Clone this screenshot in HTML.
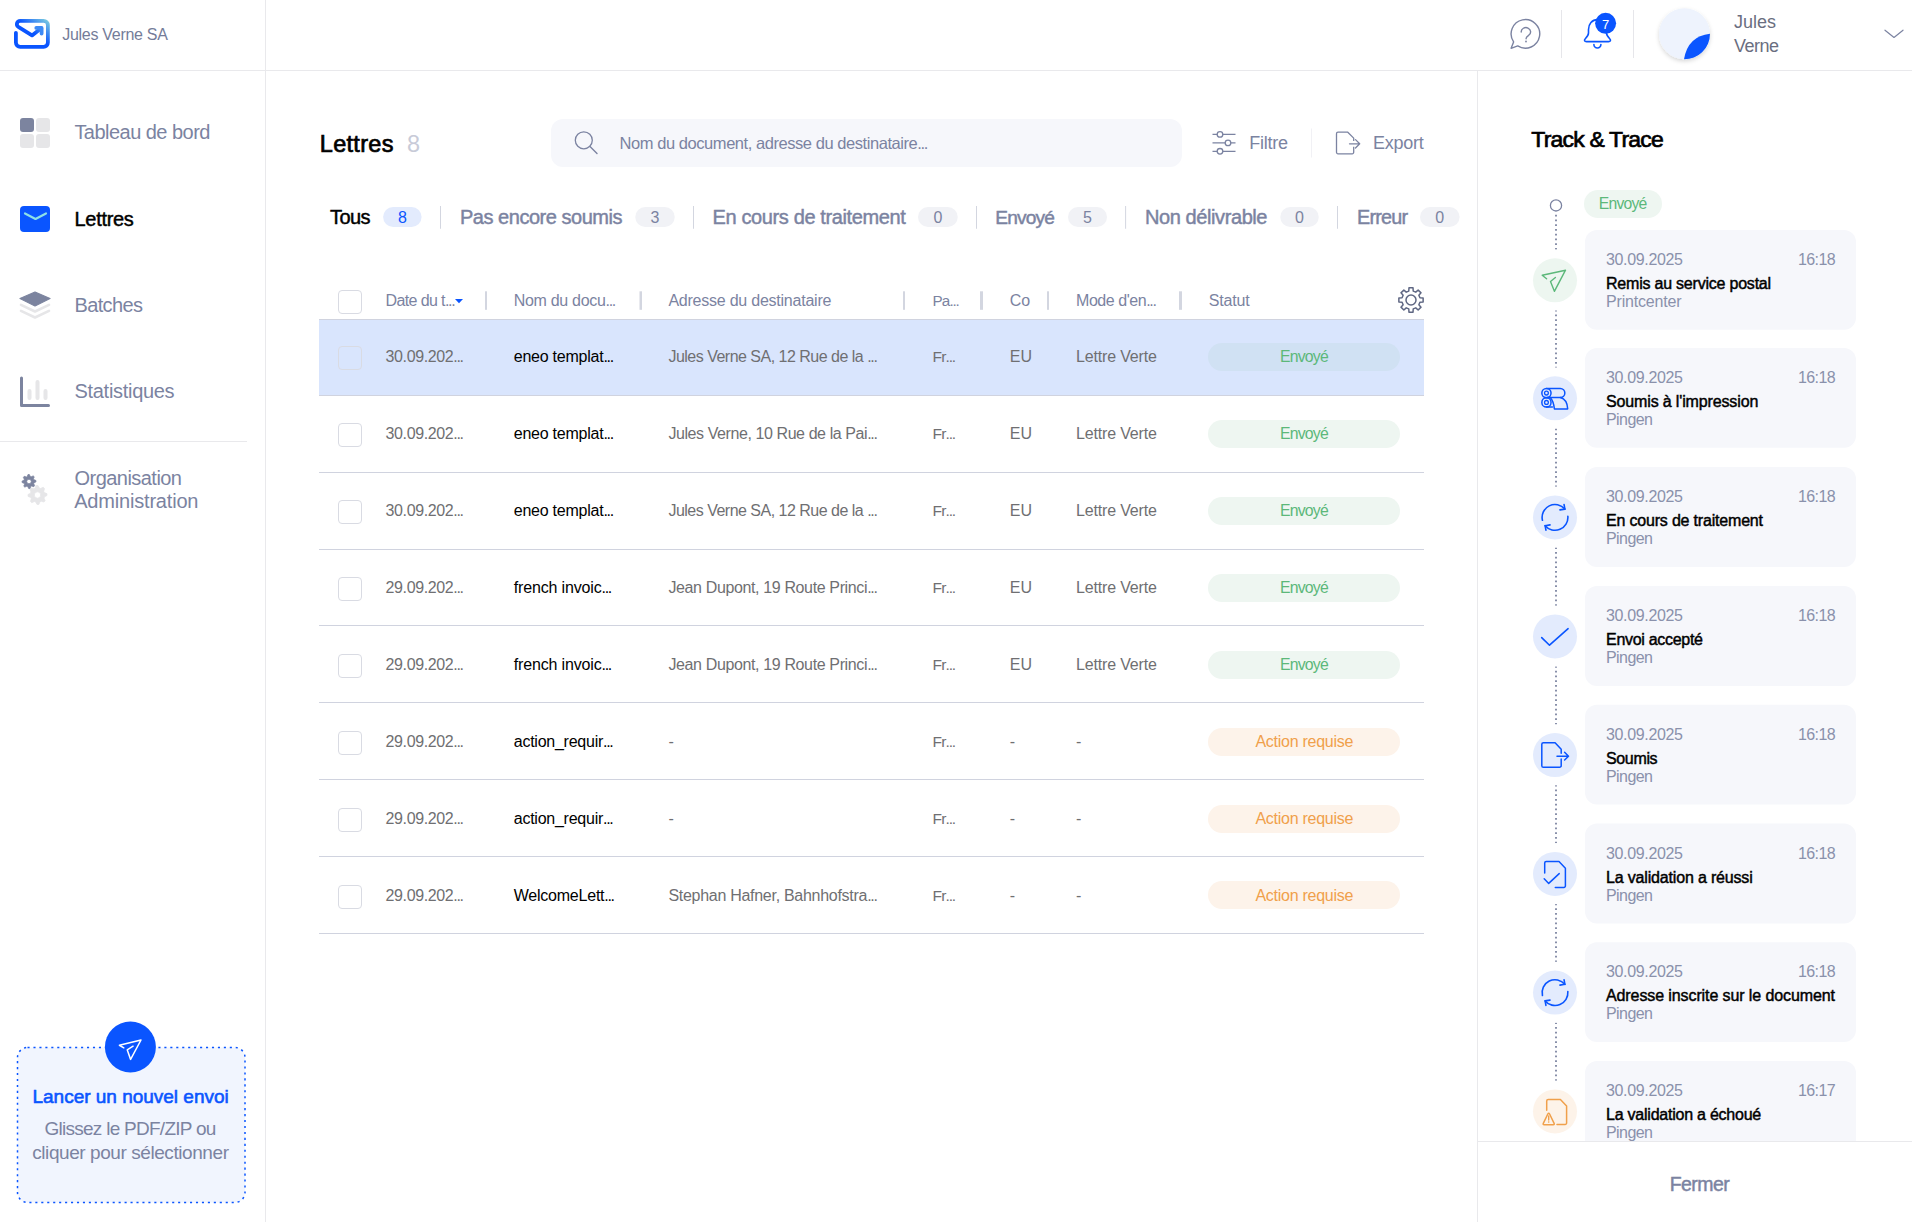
<!DOCTYPE html>
<html><head><meta charset="utf-8"><title>Lettres</title>
<style>
html,body{margin:0;padding:0;background:#fff;}
body{width:1912px;height:1222px;position:relative;overflow:hidden;font-family:"Liberation Sans",sans-serif;}
.t{position:absolute;white-space:nowrap;line-height:1;}
svg{position:absolute;left:0;top:0;}
</style></head><body>
<svg width="1912" height="1222" viewBox="0 0 1912 1222">
<rect x="0" y="70" width="1912" height="1" fill="#e9e9ec"/>
<rect x="265" y="0" width="1" height="1222" fill="#e9e9ec"/>
<rect x="1477" y="71" width="1" height="1151" fill="#e9e9ec"/>
<defs><linearGradient id="lg" x1="0" y1="1" x2="1" y2="0">
<stop offset="0" stop-color="#0a55ff"/><stop offset="0.55" stop-color="#0a55ff"/><stop offset="1" stop-color="#7ac9e0"/></linearGradient></defs>
<path d="M15.9,32.8 V42.5 a4.3,4.3 0 0 0 4.3,4.3 H43.6 a4.3,4.3 0 0 0 4.3,-4.3 V25.1 a4.3,4.3 0 0 0 -4.3,-4.3 H20.2 a3.3,3.3 0 0 0 -1.9,6 L32,35.4 L41.2,28.2" fill="none" stroke="url(#lg)" stroke-width="3.8" stroke-linecap="round" stroke-linejoin="round"/>
<path d="M36.3,27.9 H41.6 V33.6" fill="none" stroke="#3d8af5" stroke-width="3.8" stroke-linecap="round" stroke-linejoin="round"/>
<rect x="20" y="118" width="14" height="14" rx="3" fill="#7c849f"/>
<rect x="36" y="118" width="14" height="14" rx="3" fill="#e6e6e8"/>
<rect x="20" y="134" width="14" height="14" rx="3" fill="#e6e6e8"/>
<rect x="36" y="134" width="14" height="14" rx="3" fill="#e6e6e8"/>
<rect x="20" y="206" width="30" height="26" rx="4" fill="#0a55ff"/>
<path d="M25,213.5 L35.5,219 L46,213.5" fill="none" stroke="#8de0e6" stroke-width="2.2" stroke-linecap="round" stroke-linejoin="round"/>
<path d="M35,292 L50,298.5 L35,306 L20,298.5 Z" fill="#7c849f" stroke="#7c849f" stroke-width="1.2" stroke-linejoin="round"/>
<path d="M21,304.8 L35,311.5 L49,304.8" fill="none" stroke="#e6e6e8" stroke-width="2.6" stroke-linecap="round" stroke-linejoin="round"/>
<path d="M21,310.8 L35,317.5 L49,310.8" fill="none" stroke="#e6e6e8" stroke-width="2.6" stroke-linecap="round" stroke-linejoin="round"/>
<path d="M21.5,378 V405.5 H48.5" fill="none" stroke="#7c849f" stroke-width="3" stroke-linecap="round" stroke-linejoin="round"/>
<path d="M29.5,391 V398 M37.5,382 V398 M45.5,391 V398" fill="none" stroke="#e6e6e8" stroke-width="4" stroke-linecap="round"/>
<rect x="0" y="441" width="247" height="1" fill="#e9e9ec"/>
<path d="M36.11,485.60 L37.97,485.51 L39.25,488.02 L40.58,488.49 L43.16,487.37 L44.54,488.62 L43.68,491.30 L44.28,492.57 L46.90,493.61 L46.99,495.47 L44.48,496.75 L44.01,498.08 L45.13,500.66 L43.88,502.04 L41.20,501.18 L39.93,501.78 L38.89,504.40 L37.03,504.49 L35.75,501.98 L34.42,501.51 L31.84,502.63 L30.46,501.38 L31.32,498.70 L30.72,497.43 L28.10,496.39 L28.01,494.53 L30.52,493.25 L30.99,491.92 L29.87,489.34 L31.12,487.96 L33.80,488.82 L35.07,488.22 Z M40.7,495 A3.2,3.2 0 1 0 34.3,495 A3.2,3.2 0 1 0 40.7,495 Z" fill="#e6e6e8" fill-rule="evenodd" stroke="#e6e6e8" stroke-width="0.8" stroke-linejoin="round"/>
<path d="M27.97,474.58 L29.34,474.51 L30.26,476.46 L31.22,476.80 L33.17,475.88 L34.19,476.80 L33.46,478.83 L33.90,479.75 L35.92,480.47 L35.99,481.84 L34.04,482.76 L33.70,483.72 L34.62,485.67 L33.70,486.69 L31.67,485.96 L30.75,486.40 L30.03,488.42 L28.66,488.49 L27.74,486.54 L26.78,486.20 L24.83,487.12 L23.81,486.20 L24.54,484.17 L24.10,483.25 L22.08,482.53 L22.01,481.16 L23.96,480.24 L24.30,479.28 L23.38,477.33 L24.30,476.31 L26.33,477.04 L27.25,476.60 Z M31.3,481.5 A2.3,2.3 0 1 0 26.7,481.5 A2.3,2.3 0 1 0 31.3,481.5 Z" fill="#7c849f" fill-rule="evenodd" stroke="#7c849f" stroke-width="0.8" stroke-linejoin="round"/>
<rect x="17.5" y="1047.5" width="227.5" height="154.9" rx="10" fill="#f1f5fe" stroke="#0a55ff" stroke-width="1.5" stroke-dasharray="2.1 3.85"/>
<circle cx="130.4" cy="1047" r="25.5" fill="#0a55ff"/>
<path d="M123.8,1047.8 L119.4,1045.25 L141,1040 L130.6,1059.4 L127.2,1049.8 L133.1,1046.2" fill="none" stroke="#fff" stroke-width="1.5" stroke-linejoin="round" stroke-linecap="round"/>
<path d="M1513.6,41.9 A14.3,14.3 0 1 1 1517.7,45.9 L1511.1,48.3 Z" fill="none" stroke="#7b83a1" stroke-width="1.4" stroke-linejoin="round"/>
<path d="M1521.2,32 a4.7,4.3 0 1 1 7.4,3.4 c-1.4,0.9 -2.5,1.5 -2.5,3.1 v0.2" fill="none" stroke="#7b83a1" stroke-width="1.4" stroke-linecap="round"/>
<circle cx="1526" cy="41.5" r="0.9" fill="#7b83a1"/>
<rect x="1561" y="10" width="1" height="48" fill="#e6e6ea"/>
<rect x="1633" y="10" width="1" height="48" fill="#e6e6ea"/>
<path d="M1597.5,19.6 c-5.5,0 -9,4.5 -9,10 v3.5 c0,2.2 -1.2,3.6 -3.2,5.6 c-1.5,1.5 -0.8,2.9 1.2,2.9 h22 c2,0 2.7,-1.4 1.2,-2.9 c-2,-2 -3.2,-3.4 -3.2,-5.6 v-3.5 c0,-5.5 -3.5,-10 -9,-10 Z" fill="none" stroke="#0a55ff" stroke-width="1.6" stroke-linejoin="round"/>
<path d="M1593.9,44.5 a3.5,3.5 0 0 0 7,0" fill="none" stroke="#0a55ff" stroke-width="1.6" stroke-linecap="round"/>
<circle cx="1605.6" cy="23.3" r="10.5" fill="#0a55ff"/>
<defs><filter id="sh" x="-30%" y="-30%" width="160%" height="160%"><feDropShadow dx="0" dy="2" stdDeviation="2" flood-color="#000" flood-opacity="0.16"/></filter></defs>
<circle cx="1684.5" cy="33.8" r="25.5" fill="#eef3fd" filter="url(#sh)"/>
<path d="M1684,59.3 A25.5,25.5 0 0 0 1710,33.8 Q1688,36 1684,59.3 Z" fill="#0a55ff"/>
<path d="M1885,30.2 L1894,37.5 L1903,30.2" fill="none" stroke="#7b83a1" stroke-width="1.2" stroke-linecap="round" stroke-linejoin="round"/>
<rect x="551" y="119" width="631" height="48" rx="12" fill="#f6f7fb"/>
<circle cx="583.8" cy="140.3" r="8.5" fill="none" stroke="#7b83a1" stroke-width="1.3"/>
<path d="M590,146.6 L597,153.6" fill="none" stroke="#7b83a1" stroke-width="1.4" stroke-linecap="round"/>
<path d="M1212.5,134.4 H1235.5 M1212.5,142.9 H1235.5 M1212.5,151.3 H1235.5" fill="none" stroke="#7b83a1" stroke-width="1.3"/>
<circle cx="1220" cy="134.4" r="2.8" fill="#fff" stroke="#7b83a1" stroke-width="1.3"/>
<circle cx="1228" cy="142.9" r="2.8" fill="#fff" stroke="#7b83a1" stroke-width="1.3"/>
<circle cx="1220" cy="151.3" r="2.8" fill="#fff" stroke="#7b83a1" stroke-width="1.3"/>
<rect x="1311" y="128.5" width="1" height="29" fill="#f1f1f5"/>
<path d="M1353.7,140.9 V138.1 L1347.8,132.2 H1338 a1.5,1.5 0 0 0 -1.5,1.5 V152.3 a1.5,1.5 0 0 0 1.5,1.5 H1352.2 a1.5,1.5 0 0 0 1.5,-1.5 V146.7" fill="none" stroke="#7b83a1" stroke-width="1.3" stroke-linejoin="round"/>
<path d="M1349.5,143.8 H1359.5 M1355.5,139.6 L1359.7,143.8 L1355.5,148" fill="none" stroke="#7b83a1" stroke-width="1.3" stroke-linecap="round" stroke-linejoin="round"/>
<rect x="383.1" y="207" width="38.50" height="20" rx="10" fill="#e3ebfd"/>
<rect x="440.00" y="206" width="1" height="22.75" fill="#d3d6e0"/>
<rect x="635.25" y="207" width="39.50" height="20" rx="10" fill="#f1f2f6"/>
<rect x="693.00" y="206" width="1" height="22.75" fill="#d3d6e0"/>
<rect x="918" y="207" width="39.75" height="20" rx="10" fill="#f1f2f6"/>
<rect x="976.00" y="206" width="1" height="22.75" fill="#d3d6e0"/>
<rect x="1068" y="207" width="39.00" height="20" rx="10" fill="#f1f2f6"/>
<rect x="1125.10" y="206" width="1" height="22.75" fill="#d3d6e0"/>
<rect x="1280.25" y="207" width="38.50" height="20" rx="10" fill="#f1f2f6"/>
<rect x="1337.00" y="206" width="1" height="22.75" fill="#d3d6e0"/>
<rect x="1420" y="207" width="39.60" height="20" rx="10" fill="#f1f2f6"/>
<rect x="338.5" y="290.5" width="23" height="23" rx="3.5" fill="#fff" stroke="#d9dbe3" stroke-width="1"/>
<path d="M455,299 L463,299 L459,303.3 Z" fill="#0a55ff"/>
<rect x="485" y="291.3" width="2" height="18.5" fill="#d3d6e0"/>
<rect x="639.5" y="291.3" width="2.5" height="18.5" fill="#d3d6e0"/>
<rect x="903" y="291.3" width="2" height="18.5" fill="#d3d6e0"/>
<rect x="980" y="291.3" width="3" height="18.5" fill="#d3d6e0"/>
<rect x="1047" y="291.3" width="2" height="18.5" fill="#d3d6e0"/>
<rect x="1179" y="291.3" width="3" height="18.5" fill="#d3d6e0"/>
<path d="M1408.78,291.07 L1408.98,287.87 L1413.02,287.87 L1413.22,291.07 L1415.75,292.12 L1418.15,289.99 L1421.01,292.85 L1418.88,295.25 L1419.93,297.78 L1423.13,297.98 L1423.13,302.02 L1419.93,302.22 L1418.88,304.75 L1421.01,307.15 L1418.15,310.01 L1415.75,307.88 L1413.22,308.93 L1413.02,312.13 L1408.98,312.13 L1408.78,308.93 L1406.25,307.88 L1403.85,310.01 L1400.99,307.15 L1403.12,304.75 L1402.07,302.22 L1398.87,302.02 L1398.87,297.98 L1402.07,297.78 L1403.12,295.25 L1400.99,292.85 L1403.85,289.99 L1406.25,292.12 Z" fill="none" stroke="#5f6783" stroke-width="1.5" stroke-linejoin="round"/>
<circle cx="1411" cy="300" r="5" fill="none" stroke="#5f6783" stroke-width="1.5"/>
<rect x="319" y="319" width="1105" height="1" fill="#d0d3df"/>
<rect x="319" y="320" width="1105" height="75" fill="#d9e5fd"/>
<rect x="319" y="395" width="1105" height="1" fill="#d0d3df"/>
<rect x="338.5" y="346.5" width="23" height="23" rx="3.5" fill="#d9e5fd" stroke="#d9dbe3" stroke-width="1"/>
<rect x="1208" y="343" width="192" height="28" rx="14" fill="#d0e1f3"/>
<rect x="319" y="472" width="1105" height="1" fill="#d0d3df"/>
<rect x="338.5" y="423.5" width="23" height="23" rx="3.5" fill="#fff" stroke="#d9dbe3" stroke-width="1"/>
<rect x="1208" y="420" width="192" height="28" rx="14" fill="#eef6f1"/>
<rect x="319" y="549" width="1105" height="1" fill="#d0d3df"/>
<rect x="338.5" y="500.5" width="23" height="23" rx="3.5" fill="#fff" stroke="#d9dbe3" stroke-width="1"/>
<rect x="1208" y="497" width="192" height="28" rx="14" fill="#eef6f1"/>
<rect x="319" y="625" width="1105" height="1" fill="#d0d3df"/>
<rect x="338.5" y="577.5" width="23" height="23" rx="3.5" fill="#fff" stroke="#d9dbe3" stroke-width="1"/>
<rect x="1208" y="574" width="192" height="28" rx="14" fill="#eef6f1"/>
<rect x="319" y="702" width="1105" height="1" fill="#d0d3df"/>
<rect x="338.5" y="654.5" width="23" height="23" rx="3.5" fill="#fff" stroke="#d9dbe3" stroke-width="1"/>
<rect x="1208" y="651" width="192" height="28" rx="14" fill="#eef6f1"/>
<rect x="319" y="779" width="1105" height="1" fill="#d0d3df"/>
<rect x="338.5" y="731.5" width="23" height="23" rx="3.5" fill="#fff" stroke="#d9dbe3" stroke-width="1"/>
<rect x="1208" y="728" width="192" height="28" rx="14" fill="#fdf3ea"/>
<rect x="319" y="856" width="1105" height="1" fill="#d0d3df"/>
<rect x="338.5" y="808.5" width="23" height="23" rx="3.5" fill="#fff" stroke="#d9dbe3" stroke-width="1"/>
<rect x="1208" y="805" width="192" height="28" rx="14" fill="#fdf3ea"/>
<rect x="319" y="933" width="1105" height="1" fill="#d0d3df"/>
<rect x="338.5" y="885.5" width="23" height="23" rx="3.5" fill="#fff" stroke="#d9dbe3" stroke-width="1"/>
<rect x="1208" y="881" width="192" height="28" rx="14" fill="#fdf3ea"/>
<circle cx="1556" cy="205.4" r="5.6" fill="none" stroke="#7b83a1" stroke-width="1.3"/>
<rect x="1584" y="190" width="78" height="28" rx="14" fill="#eef6f1"/>
<path d="M1556,214.80 v1.6 M1556,219.55 v1.6 M1556,224.30 v1.6 M1556,229.05 v1.6 M1556,233.80 v1.6 M1556,238.55 v1.6 M1556,243.30 v1.6 M1556,248.05 v1.6 M1556,252.80 v1.6 M1556,257.55 v1.6 M1556,262.30 v1.6 M1556,267.05 v1.6 M1556,271.80 v1.6 M1556,276.55 v1.6 M1556,281.30 v1.6 M1556,286.05 v1.6 M1556,290.80 v1.6 M1556,295.55 v1.6 M1556,300.30 v1.6 M1556,305.05 v1.6 M1556,309.80 v1.6 M1556,314.55 v1.6 M1556,319.30 v1.6 M1556,324.05 v1.6 M1556,328.80 v1.6 M1556,333.55 v1.6 M1556,338.30 v1.6 M1556,343.05 v1.6 M1556,347.80 v1.6 M1556,352.55 v1.6 M1556,357.30 v1.6 M1556,362.05 v1.6 M1556,366.80 v1.6 M1556,371.55 v1.6 M1556,376.30 v1.6 M1556,381.05 v1.6 M1556,385.80 v1.6 M1556,390.55 v1.6 M1556,395.30 v1.6 M1556,400.05 v1.6 M1556,404.80 v1.6 M1556,409.55 v1.6 M1556,414.30 v1.6 M1556,419.05 v1.6 M1556,423.80 v1.6 M1556,428.55 v1.6 M1556,433.30 v1.6 M1556,438.05 v1.6 M1556,442.80 v1.6 M1556,447.55 v1.6 M1556,452.30 v1.6 M1556,457.05 v1.6 M1556,461.80 v1.6 M1556,466.55 v1.6 M1556,471.30 v1.6 M1556,476.05 v1.6 M1556,480.80 v1.6 M1556,485.55 v1.6 M1556,490.30 v1.6 M1556,495.05 v1.6 M1556,499.80 v1.6 M1556,504.55 v1.6 M1556,509.30 v1.6 M1556,514.05 v1.6 M1556,518.80 v1.6 M1556,523.55 v1.6 M1556,528.30 v1.6 M1556,533.05 v1.6 M1556,537.80 v1.6 M1556,542.55 v1.6 M1556,547.30 v1.6 M1556,552.05 v1.6 M1556,556.80 v1.6 M1556,561.55 v1.6 M1556,566.30 v1.6 M1556,571.05 v1.6 M1556,575.80 v1.6 M1556,580.55 v1.6 M1556,585.30 v1.6 M1556,590.05 v1.6 M1556,594.80 v1.6 M1556,599.55 v1.6 M1556,604.30 v1.6 M1556,609.05 v1.6 M1556,613.80 v1.6 M1556,618.55 v1.6 M1556,623.30 v1.6 M1556,628.05 v1.6 M1556,632.80 v1.6 M1556,637.55 v1.6 M1556,642.30 v1.6 M1556,647.05 v1.6 M1556,651.80 v1.6 M1556,656.55 v1.6 M1556,661.30 v1.6 M1556,666.05 v1.6 M1556,670.80 v1.6 M1556,675.55 v1.6 M1556,680.30 v1.6 M1556,685.05 v1.6 M1556,689.80 v1.6 M1556,694.55 v1.6 M1556,699.30 v1.6 M1556,704.05 v1.6 M1556,708.80 v1.6 M1556,713.55 v1.6 M1556,718.30 v1.6 M1556,723.05 v1.6 M1556,727.80 v1.6 M1556,732.55 v1.6 M1556,737.30 v1.6 M1556,742.05 v1.6 M1556,746.80 v1.6 M1556,751.55 v1.6 M1556,756.30 v1.6 M1556,761.05 v1.6 M1556,765.80 v1.6 M1556,770.55 v1.6 M1556,775.30 v1.6 M1556,780.05 v1.6 M1556,784.80 v1.6 M1556,789.55 v1.6 M1556,794.30 v1.6 M1556,799.05 v1.6 M1556,803.80 v1.6 M1556,808.55 v1.6 M1556,813.30 v1.6 M1556,818.05 v1.6 M1556,822.80 v1.6 M1556,827.55 v1.6 M1556,832.30 v1.6 M1556,837.05 v1.6 M1556,841.80 v1.6 M1556,846.55 v1.6 M1556,851.30 v1.6 M1556,856.05 v1.6 M1556,860.80 v1.6 M1556,865.55 v1.6 M1556,870.30 v1.6 M1556,875.05 v1.6 M1556,879.80 v1.6 M1556,884.55 v1.6 M1556,889.30 v1.6 M1556,894.05 v1.6 M1556,898.80 v1.6 M1556,903.55 v1.6 M1556,908.30 v1.6 M1556,913.05 v1.6 M1556,917.80 v1.6 M1556,922.55 v1.6 M1556,927.30 v1.6 M1556,932.05 v1.6 M1556,936.80 v1.6 M1556,941.55 v1.6 M1556,946.30 v1.6 M1556,951.05 v1.6 M1556,955.80 v1.6 M1556,960.55 v1.6 M1556,965.30 v1.6 M1556,970.05 v1.6 M1556,974.80 v1.6 M1556,979.55 v1.6 M1556,984.30 v1.6 M1556,989.05 v1.6 M1556,993.80 v1.6 M1556,998.55 v1.6 M1556,1003.30 v1.6 M1556,1008.05 v1.6 M1556,1012.80 v1.6 M1556,1017.55 v1.6 M1556,1022.30 v1.6 M1556,1027.05 v1.6 M1556,1031.80 v1.6 M1556,1036.55 v1.6 M1556,1041.30 v1.6 M1556,1046.05 v1.6 M1556,1050.80 v1.6 M1556,1055.55 v1.6 M1556,1060.30 v1.6 M1556,1065.05 v1.6 M1556,1069.80 v1.6 M1556,1074.55 v1.6 M1556,1079.30 v1.6 M1556,1084.05 v1.6 M1556,1088.80 v1.6 M1556,1093.55 v1.6 M1556,1098.30 v1.6 M1556,1103.05 v1.6 M1556,1107.80 v1.6 M1556,1112.55 v1.6 M1556,1117.30 v1.6 M1556,1122.05 v1.6 M1556,1126.80 v1.6 M1556,1131.55 v1.6 M1556,1136.30 v1.6" fill="none" stroke="#7c84a0" stroke-width="1.8"/>
<rect x="1585" y="230.00" width="271" height="99.8" rx="12" fill="#f6f7fb"/>
<rect x="1530" y="249.50" width="52" height="61" fill="#fff"/>
<circle cx="1555" cy="280.3" r="22" fill="#edf6f0"/><path d="M1546.60,278.80 L1542.20,275.30 L1565.50,270.20 L1554.40,291.30 L1550.50,281.50 L1555.40,277.50" fill="none" stroke="#5cb87a" stroke-width="1.4" stroke-linejoin="round" stroke-linecap="round"/>
<rect x="1585" y="348.00" width="271" height="99.8" rx="12" fill="#f6f7fb"/>
<rect x="1530" y="367.50" width="52" height="61" fill="#fff"/>
<circle cx="1555" cy="398.3" r="22" fill="#e3ebfd"/><circle cx="1546.45" cy="393.10" r="4.6" fill="none" stroke="#0a55ff" stroke-width="1.5"/><circle cx="1546.45" cy="393.10" r="1.9" fill="none" stroke="#0a55ff" stroke-width="1.3"/><circle cx="1546.45" cy="402.40" r="4.6" fill="none" stroke="#0a55ff" stroke-width="1.5"/><circle cx="1546.45" cy="402.40" r="1.9" fill="none" stroke="#0a55ff" stroke-width="1.3"/><path d="M1546.45,388.40 H1560.30 A4.55,4.55 0 0 1 1560.30,397.50 H1546.45" fill="none" stroke="#0a55ff" stroke-width="1.5"/><path d="M1560.30,397.50 Q1567.20,399.30 1567.70,408.90 H1554.40 Q1553.50,400.80 1550.20,397.50 M1546.45,407.00 H1552.40" fill="none" stroke="#0a55ff" stroke-width="1.5" stroke-linejoin="round" stroke-linecap="round"/>
<rect x="1585" y="467.10" width="271" height="99.8" rx="12" fill="#f6f7fb"/>
<rect x="1530" y="486.60" width="52" height="61" fill="#fff"/>
<circle cx="1555" cy="517.4" r="22" fill="#e3ebfd"/><path d="M1542.43,520.30 A12.9,12.9 0 0 1 1564.88,509.11 M1567.85,516.28 A12.9,12.9 0 0 1 1545.12,525.69" fill="none" stroke="#0a55ff" stroke-width="1.6" stroke-linecap="round"/><path d="M1564.08,504.61 L1564.88,509.11 L1559.98,509.91 M1545.92,530.19 L1545.12,525.69 L1550.02,524.89" fill="none" stroke="#0a55ff" stroke-width="1.6" stroke-linecap="round" stroke-linejoin="round"/>
<rect x="1585" y="586.10" width="271" height="99.8" rx="12" fill="#f6f7fb"/>
<rect x="1530" y="605.60" width="52" height="61" fill="#fff"/>
<circle cx="1555" cy="636.4" r="22" fill="#e3ebfd"/><path d="M1541.70,637.60 L1549.50,645.20 L1568.10,628.70" fill="none" stroke="#0a55ff" stroke-width="1.6" stroke-linecap="round" stroke-linejoin="round"/>
<rect x="1585" y="704.80" width="271" height="99.8" rx="12" fill="#f6f7fb"/>
<rect x="1530" y="724.30" width="52" height="61" fill="#fff"/>
<circle cx="1555" cy="755.1" r="22" fill="#e3ebfd"/><path d="M1561.20,753.30 V749.30 L1555.10,742.70 H1543.40 a1.6,1.6 0 0 0 -1.6,1.6 V765.70 a1.6,1.6 0 0 0 1.6,1.6 H1559.60 a1.6,1.6 0 0 0 1.6,-1.6 V758.90" fill="none" stroke="#0a55ff" stroke-width="1.5" stroke-linejoin="round" stroke-linecap="round"/><path d="M1557.00,756.20 H1568.50 M1564.60,752.20 L1568.50,756.20 L1564.60,760.00" fill="none" stroke="#0a55ff" stroke-width="1.5" stroke-linecap="round" stroke-linejoin="round"/>
<rect x="1585" y="823.60" width="271" height="99.8" rx="12" fill="#f6f7fb"/>
<rect x="1530" y="843.10" width="52" height="61" fill="#fff"/>
<circle cx="1555" cy="873.9" r="22" fill="#e3ebfd"/><path d="M1544.70,872.90 V862.90 a1.5,1.5 0 0 1 1.5,-1.5 H1559.00 L1565.40,868.20 V885.90 a1.5,1.5 0 0 1 -1.5,1.5 H1555.30" fill="none" stroke="#0a55ff" stroke-width="1.5" stroke-linejoin="round" stroke-linecap="round"/><path d="M1544.20,878.80 L1548.70,883.40 L1559.20,873.60" fill="none" stroke="#0a55ff" stroke-width="1.5" stroke-linecap="round" stroke-linejoin="round"/>
<rect x="1585" y="942.30" width="271" height="99.8" rx="12" fill="#f6f7fb"/>
<rect x="1530" y="961.80" width="52" height="61" fill="#fff"/>
<circle cx="1555" cy="992.6" r="22" fill="#e3ebfd"/><path d="M1542.43,995.50 A12.9,12.9 0 0 1 1564.88,984.31 M1567.85,991.48 A12.9,12.9 0 0 1 1545.12,1000.89" fill="none" stroke="#0a55ff" stroke-width="1.6" stroke-linecap="round"/><path d="M1564.08,979.81 L1564.88,984.31 L1559.98,985.11 M1545.92,1005.39 L1545.12,1000.89 L1550.02,1000.09" fill="none" stroke="#0a55ff" stroke-width="1.6" stroke-linecap="round" stroke-linejoin="round"/>
<rect x="1585" y="1061.10" width="271" height="99.8" rx="12" fill="#f6f7fb"/>
<rect x="1530" y="1080.60" width="52" height="61" fill="#fff"/>
<circle cx="1555" cy="1111.4" r="22" fill="#fdf3e9"/><path d="M1546.70,1110.20 V1100.90 a1.5,1.5 0 0 1 1.5,-1.5 H1560.40 L1566.60,1106.00 V1123.00 a1.5,1.5 0 0 1 -1.5,1.5 H1557.00" fill="none" stroke="#f0a04b" stroke-width="1.5" stroke-linejoin="round" stroke-linecap="round"/><path d="M1547.80,1114.00 Q1548.70,1112.40 1549.60,1114.00 L1554.10,1123.40 Q1554.70,1124.70 1553.30,1124.70 H1544.10 Q1542.70,1124.70 1543.30,1123.40 Z" fill="none" stroke="#f0a04b" stroke-width="1.5" stroke-linejoin="round"/><path d="M1548.70,1116.00 V1120.00" fill="none" stroke="#f0a04b" stroke-width="1.4" stroke-linecap="round"/><circle cx="1548.70" cy="1122.00" r="0.8" fill="#f0a04b"/>
</svg>
<div class="t" style="left:62.20px;top:27.00px;font-size:16px;font-weight:400;color:#747c99;letter-spacing:-0.285px;">Jules Verne SA</div>
<div class="t" style="left:74.40px;top:122.00px;font-size:20px;font-weight:400;color:#7b83a1;letter-spacing:-0.532px;">Tableau de bord</div>
<div class="t" style="left:74.50px;top:209.00px;font-size:20px;font-weight:400;color:#000;letter-spacing:-0.307px;-webkit-text-stroke:0.45px #000;">Lettres</div>
<div class="t" style="left:74.50px;top:295.00px;font-size:20px;font-weight:400;color:#7b83a1;letter-spacing:-0.645px;">Batches</div>
<div class="t" style="left:74.50px;top:381.00px;font-size:20px;font-weight:400;color:#7b83a1;letter-spacing:-0.299px;">Statistiques</div>
<div class="t" style="left:74.50px;top:468.00px;font-size:20px;font-weight:400;color:#7b83a1;letter-spacing:-0.537px;">Organisation</div>
<div class="t" style="left:74.20px;top:491.00px;font-size:20px;font-weight:400;color:#7b83a1;letter-spacing:-0.186px;">Administration</div>
<div class="t" style="left:32.47px;top:1087.00px;font-size:19px;font-weight:400;color:#0a55ff;letter-spacing:-0.011px;-webkit-text-stroke:0.45px #0a55ff;-webkit-text-stroke:0.6px #0a55ff;">Lancer un nouvel envoi</div>
<div class="t" style="left:44.40px;top:1119.00px;font-size:19px;font-weight:400;color:#7b83a1;letter-spacing:-0.727px;">Glissez le PDF/ZIP ou</div>
<div class="t" style="left:32.22px;top:1143.00px;font-size:19px;font-weight:400;color:#7b83a1;letter-spacing:-0.428px;">cliquer pour sélectionner</div>
<div class="t" style="left:1601.98px;top:18.00px;font-size:13px;font-weight:400;color:#fff;letter-spacing:0.000px;">7</div>
<div class="t" style="left:1734.00px;top:13.00px;font-size:18px;font-weight:400;color:#6a6e80;letter-spacing:-0.005px;">Jules</div>
<div class="t" style="left:1734.00px;top:37.00px;font-size:18px;font-weight:400;color:#6a6e80;letter-spacing:-0.510px;">Verne</div>
<div class="t" style="left:319.75px;top:133.00px;font-size:23.5px;font-weight:400;color:#000;letter-spacing:0.318px;-webkit-text-stroke:0.45px #000;-webkit-text-stroke:0.7px #000;">Lettres</div>
<div class="t" style="left:406.90px;top:133.00px;font-size:23.5px;font-weight:400;color:#c8cbd8;letter-spacing:0.000px;">8</div>
<div class="t" style="left:619.60px;top:135.00px;font-size:16.5px;font-weight:400;color:#7b83a1;letter-spacing:-0.445px;">Nom du document, adresse du destinataire<span style="letter-spacing:-1.34px">...</span></div>
<div class="t" style="left:1249.25px;top:134.00px;font-size:18px;font-weight:400;color:#7b83a1;letter-spacing:-0.230px;">Filtre</div>
<div class="t" style="left:1373.00px;top:134.00px;font-size:18px;font-weight:400;color:#7b83a1;letter-spacing:-0.255px;">Export</div>
<div class="t" style="left:330.00px;top:207.00px;font-size:20px;font-weight:400;color:#000;letter-spacing:-0.549px;-webkit-text-stroke:0.45px #000;">Tous</div>
<div class="t" style="left:397.90px;top:210.00px;font-size:16px;font-weight:400;color:#0a55ff;letter-spacing:0.000px;">8</div>
<div class="t" style="left:460.00px;top:207.00px;font-size:20px;font-weight:400;color:#7b83a1;letter-spacing:-0.474px;-webkit-text-stroke:0.45px #7b83a1;">Pas encore soumis</div>
<div class="t" style="left:650.55px;top:210.00px;font-size:16px;font-weight:400;color:#7b83a1;letter-spacing:0.000px;">3</div>
<div class="t" style="left:712.50px;top:207.00px;font-size:20px;font-weight:400;color:#7b83a1;letter-spacing:-0.372px;-webkit-text-stroke:0.45px #7b83a1;">En cours de traitement</div>
<div class="t" style="left:933.43px;top:210.00px;font-size:16px;font-weight:400;color:#7b83a1;letter-spacing:0.000px;">0</div>
<div class="t" style="left:995.25px;top:208.00px;font-size:19.11px;font-weight:400;color:#7b83a1;letter-spacing:-0.798px;-webkit-text-stroke:0.45px #7b83a1;">Envoyé</div>
<div class="t" style="left:1083.05px;top:210.00px;font-size:16px;font-weight:400;color:#7b83a1;letter-spacing:0.000px;">5</div>
<div class="t" style="left:1145.00px;top:207.00px;font-size:20px;font-weight:400;color:#7b83a1;letter-spacing:-0.412px;-webkit-text-stroke:0.45px #7b83a1;">Non délivrable</div>
<div class="t" style="left:1295.05px;top:210.00px;font-size:16px;font-weight:400;color:#7b83a1;letter-spacing:0.000px;">0</div>
<div class="t" style="left:1357.00px;top:208.00px;font-size:19.79px;font-weight:400;color:#7b83a1;letter-spacing:-0.797px;-webkit-text-stroke:0.45px #7b83a1;">Erreur</div>
<div class="t" style="left:1435.35px;top:210.00px;font-size:16px;font-weight:400;color:#7b83a1;letter-spacing:0.000px;">0</div>
<div class="t" style="left:385.60px;top:293.00px;font-size:16px;font-weight:400;color:#7b83a1;letter-spacing:-0.629px;">Date du t<span style="letter-spacing:-1.30px">...</span></div>
<div class="t" style="left:513.75px;top:293.00px;font-size:16px;font-weight:400;color:#7b83a1;letter-spacing:-0.309px;">Nom du docu<span style="letter-spacing:-1.30px">...</span></div>
<div class="t" style="left:668.40px;top:293.00px;font-size:16px;font-weight:400;color:#7b83a1;letter-spacing:-0.232px;">Adresse du destinataire</div>
<div class="t" style="left:932.50px;top:293.00px;font-size:15.23px;font-weight:400;color:#7b83a1;letter-spacing:-0.799px;">Pa<span style="letter-spacing:-1.24px">...</span></div>
<div class="t" style="left:1009.75px;top:293.00px;font-size:16px;font-weight:400;color:#7b83a1;letter-spacing:0.000px;">Co</div>
<div class="t" style="left:1076.00px;top:293.00px;font-size:16px;font-weight:400;color:#7b83a1;letter-spacing:-0.451px;">Mode d&#x27;en<span style="letter-spacing:-1.30px">...</span></div>
<div class="t" style="left:1208.75px;top:293.00px;font-size:16px;font-weight:400;color:#7b83a1;letter-spacing:-0.191px;">Statut</div>
<div class="t" style="left:385.60px;top:349.00px;font-size:16px;font-weight:400;color:#6f6f72;letter-spacing:-0.391px;">30.09.202<span style="letter-spacing:-1.30px">...</span></div>
<div class="t" style="left:513.75px;top:349.00px;font-size:16px;font-weight:400;color:#000;letter-spacing:-0.237px;">eneo templat<span style="letter-spacing:-1.30px">...</span></div>
<div class="t" style="left:668.40px;top:349.00px;font-size:16px;font-weight:400;color:#6f6f72;letter-spacing:-0.507px;">Jules Verne SA, 12 Rue de la <span style="letter-spacing:-1.30px">...</span></div>
<div class="t" style="left:932.50px;top:349.00px;font-size:15.54px;font-weight:400;color:#6f6f72;letter-spacing:-0.797px;">Fr<span style="letter-spacing:-1.26px">...</span></div>
<div class="t" style="left:1009.75px;top:349.00px;font-size:16px;font-weight:400;color:#6f6f72;letter-spacing:0.000px;">EU</div>
<div class="t" style="left:1076.00px;top:349.00px;font-size:16px;font-weight:400;color:#6f6f72;letter-spacing:-0.166px;">Lettre Verte</div>
<div class="t" style="left:1280.03px;top:349.00px;font-size:15.81px;font-weight:400;color:#5cb87a;letter-spacing:-0.797px;">Envoyé</div>
<div class="t" style="left:385.60px;top:426.00px;font-size:16px;font-weight:400;color:#6f6f72;letter-spacing:-0.391px;">30.09.202<span style="letter-spacing:-1.30px">...</span></div>
<div class="t" style="left:513.75px;top:426.00px;font-size:16px;font-weight:400;color:#000;letter-spacing:-0.237px;">eneo templat<span style="letter-spacing:-1.30px">...</span></div>
<div class="t" style="left:668.40px;top:426.00px;font-size:16px;font-weight:400;color:#6f6f72;letter-spacing:-0.415px;">Jules Verne, 10 Rue de la Pai<span style="letter-spacing:-1.30px">...</span></div>
<div class="t" style="left:932.50px;top:426.00px;font-size:15.54px;font-weight:400;color:#6f6f72;letter-spacing:-0.797px;">Fr<span style="letter-spacing:-1.26px">...</span></div>
<div class="t" style="left:1009.75px;top:426.00px;font-size:16px;font-weight:400;color:#6f6f72;letter-spacing:0.000px;">EU</div>
<div class="t" style="left:1076.00px;top:426.00px;font-size:16px;font-weight:400;color:#6f6f72;letter-spacing:-0.166px;">Lettre Verte</div>
<div class="t" style="left:1280.03px;top:426.00px;font-size:15.81px;font-weight:400;color:#5cb87a;letter-spacing:-0.797px;">Envoyé</div>
<div class="t" style="left:385.60px;top:503.00px;font-size:16px;font-weight:400;color:#6f6f72;letter-spacing:-0.391px;">30.09.202<span style="letter-spacing:-1.30px">...</span></div>
<div class="t" style="left:513.75px;top:503.00px;font-size:16px;font-weight:400;color:#000;letter-spacing:-0.237px;">eneo templat<span style="letter-spacing:-1.30px">...</span></div>
<div class="t" style="left:668.40px;top:503.00px;font-size:16px;font-weight:400;color:#6f6f72;letter-spacing:-0.507px;">Jules Verne SA, 12 Rue de la <span style="letter-spacing:-1.30px">...</span></div>
<div class="t" style="left:932.50px;top:503.00px;font-size:15.54px;font-weight:400;color:#6f6f72;letter-spacing:-0.797px;">Fr<span style="letter-spacing:-1.26px">...</span></div>
<div class="t" style="left:1009.75px;top:503.00px;font-size:16px;font-weight:400;color:#6f6f72;letter-spacing:0.000px;">EU</div>
<div class="t" style="left:1076.00px;top:503.00px;font-size:16px;font-weight:400;color:#6f6f72;letter-spacing:-0.166px;">Lettre Verte</div>
<div class="t" style="left:1280.03px;top:503.00px;font-size:15.81px;font-weight:400;color:#5cb87a;letter-spacing:-0.797px;">Envoyé</div>
<div class="t" style="left:385.60px;top:580.00px;font-size:16px;font-weight:400;color:#6f6f72;letter-spacing:-0.391px;">29.09.202<span style="letter-spacing:-1.30px">...</span></div>
<div class="t" style="left:513.75px;top:580.00px;font-size:16px;font-weight:400;color:#000;letter-spacing:-0.158px;">french invoic<span style="letter-spacing:-1.30px">...</span></div>
<div class="t" style="left:668.40px;top:580.00px;font-size:16px;font-weight:400;color:#6f6f72;letter-spacing:-0.366px;">Jean Dupont, 19 Route Princi<span style="letter-spacing:-1.30px">...</span></div>
<div class="t" style="left:932.50px;top:580.00px;font-size:15.54px;font-weight:400;color:#6f6f72;letter-spacing:-0.797px;">Fr<span style="letter-spacing:-1.26px">...</span></div>
<div class="t" style="left:1009.75px;top:580.00px;font-size:16px;font-weight:400;color:#6f6f72;letter-spacing:0.000px;">EU</div>
<div class="t" style="left:1076.00px;top:580.00px;font-size:16px;font-weight:400;color:#6f6f72;letter-spacing:-0.166px;">Lettre Verte</div>
<div class="t" style="left:1280.03px;top:580.00px;font-size:15.81px;font-weight:400;color:#5cb87a;letter-spacing:-0.797px;">Envoyé</div>
<div class="t" style="left:385.60px;top:657.00px;font-size:16px;font-weight:400;color:#6f6f72;letter-spacing:-0.391px;">29.09.202<span style="letter-spacing:-1.30px">...</span></div>
<div class="t" style="left:513.75px;top:657.00px;font-size:16px;font-weight:400;color:#000;letter-spacing:-0.158px;">french invoic<span style="letter-spacing:-1.30px">...</span></div>
<div class="t" style="left:668.40px;top:657.00px;font-size:16px;font-weight:400;color:#6f6f72;letter-spacing:-0.366px;">Jean Dupont, 19 Route Princi<span style="letter-spacing:-1.30px">...</span></div>
<div class="t" style="left:932.50px;top:657.00px;font-size:15.54px;font-weight:400;color:#6f6f72;letter-spacing:-0.797px;">Fr<span style="letter-spacing:-1.26px">...</span></div>
<div class="t" style="left:1009.75px;top:657.00px;font-size:16px;font-weight:400;color:#6f6f72;letter-spacing:0.000px;">EU</div>
<div class="t" style="left:1076.00px;top:657.00px;font-size:16px;font-weight:400;color:#6f6f72;letter-spacing:-0.166px;">Lettre Verte</div>
<div class="t" style="left:1280.03px;top:657.00px;font-size:15.81px;font-weight:400;color:#5cb87a;letter-spacing:-0.797px;">Envoyé</div>
<div class="t" style="left:385.60px;top:734.00px;font-size:16px;font-weight:400;color:#6f6f72;letter-spacing:-0.391px;">29.09.202<span style="letter-spacing:-1.30px">...</span></div>
<div class="t" style="left:513.75px;top:734.00px;font-size:16px;font-weight:400;color:#000;letter-spacing:-0.249px;">action_requir<span style="letter-spacing:-1.30px">...</span></div>
<div class="t" style="left:668.40px;top:734.00px;font-size:16px;font-weight:400;color:#6f6f72;letter-spacing:0.000px;">-</div>
<div class="t" style="left:932.50px;top:734.00px;font-size:15.54px;font-weight:400;color:#6f6f72;letter-spacing:-0.797px;">Fr<span style="letter-spacing:-1.26px">...</span></div>
<div class="t" style="left:1009.75px;top:734.00px;font-size:16px;font-weight:400;color:#6f6f72;letter-spacing:0.000px;">-</div>
<div class="t" style="left:1076.00px;top:734.00px;font-size:16px;font-weight:400;color:#6f6f72;letter-spacing:0.000px;">-</div>
<div class="t" style="left:1255.40px;top:734.00px;font-size:16px;font-weight:400;color:#f0a04b;letter-spacing:-0.261px;">Action requise</div>
<div class="t" style="left:385.60px;top:811.00px;font-size:16px;font-weight:400;color:#6f6f72;letter-spacing:-0.391px;">29.09.202<span style="letter-spacing:-1.30px">...</span></div>
<div class="t" style="left:513.75px;top:811.00px;font-size:16px;font-weight:400;color:#000;letter-spacing:-0.249px;">action_requir<span style="letter-spacing:-1.30px">...</span></div>
<div class="t" style="left:668.40px;top:811.00px;font-size:16px;font-weight:400;color:#6f6f72;letter-spacing:0.000px;">-</div>
<div class="t" style="left:932.50px;top:811.00px;font-size:15.54px;font-weight:400;color:#6f6f72;letter-spacing:-0.797px;">Fr<span style="letter-spacing:-1.26px">...</span></div>
<div class="t" style="left:1009.75px;top:811.00px;font-size:16px;font-weight:400;color:#6f6f72;letter-spacing:0.000px;">-</div>
<div class="t" style="left:1076.00px;top:811.00px;font-size:16px;font-weight:400;color:#6f6f72;letter-spacing:0.000px;">-</div>
<div class="t" style="left:1255.40px;top:811.00px;font-size:16px;font-weight:400;color:#f0a04b;letter-spacing:-0.261px;">Action requise</div>
<div class="t" style="left:385.60px;top:888.00px;font-size:16px;font-weight:400;color:#6f6f72;letter-spacing:-0.391px;">29.09.202<span style="letter-spacing:-1.30px">...</span></div>
<div class="t" style="left:513.75px;top:888.00px;font-size:16px;font-weight:400;color:#000;letter-spacing:-0.229px;">WelcomeLett<span style="letter-spacing:-1.30px">...</span></div>
<div class="t" style="left:668.40px;top:888.00px;font-size:16px;font-weight:400;color:#6f6f72;letter-spacing:-0.282px;">Stephan Hafner, Bahnhofstra<span style="letter-spacing:-1.30px">...</span></div>
<div class="t" style="left:932.50px;top:888.00px;font-size:15.54px;font-weight:400;color:#6f6f72;letter-spacing:-0.797px;">Fr<span style="letter-spacing:-1.26px">...</span></div>
<div class="t" style="left:1009.75px;top:888.00px;font-size:16px;font-weight:400;color:#6f6f72;letter-spacing:0.000px;">-</div>
<div class="t" style="left:1076.00px;top:888.00px;font-size:16px;font-weight:400;color:#6f6f72;letter-spacing:0.000px;">-</div>
<div class="t" style="left:1255.40px;top:888.00px;font-size:16px;font-weight:400;color:#f0a04b;letter-spacing:-0.261px;">Action requise</div>
<div class="t" style="left:1531.25px;top:128.00px;font-size:22.97px;font-weight:400;color:#000;letter-spacing:-0.801px;-webkit-text-stroke:0.45px #000;-webkit-text-stroke:0.7px #000;">Track &amp; Trace</div>
<div class="t" style="left:1598.75px;top:196.00px;font-size:15.74px;font-weight:400;color:#5cb87a;letter-spacing:-0.800px;">Envoyé</div>
<div class="t" style="left:1606.00px;top:252.00px;font-size:16px;font-weight:400;color:#8a91ab;letter-spacing:-0.342px;">30.09.2025</div>
<div class="t" style="left:1798.10px;top:252.00px;font-size:16px;font-weight:400;color:#8a91ab;letter-spacing:-0.635px;">16:18</div>
<div class="t" style="left:1606.00px;top:276.00px;font-size:16px;font-weight:400;color:#000;letter-spacing:-0.216px;-webkit-text-stroke:0.45px #000;">Remis au service postal</div>
<div class="t" style="left:1606.00px;top:294.00px;font-size:16px;font-weight:400;color:#8a91ab;letter-spacing:-0.177px;">Printcenter</div>
<div class="t" style="left:1606.00px;top:370.00px;font-size:16px;font-weight:400;color:#8a91ab;letter-spacing:-0.342px;">30.09.2025</div>
<div class="t" style="left:1798.10px;top:370.00px;font-size:16px;font-weight:400;color:#8a91ab;letter-spacing:-0.635px;">16:18</div>
<div class="t" style="left:1606.00px;top:394.00px;font-size:16px;font-weight:400;color:#000;letter-spacing:-0.141px;-webkit-text-stroke:0.45px #000;">Soumis à l&#x27;impression</div>
<div class="t" style="left:1606.00px;top:412.00px;font-size:16px;font-weight:400;color:#8a91ab;letter-spacing:-0.564px;">Pingen</div>
<div class="t" style="left:1606.00px;top:489.00px;font-size:16px;font-weight:400;color:#8a91ab;letter-spacing:-0.342px;">30.09.2025</div>
<div class="t" style="left:1798.10px;top:489.00px;font-size:16px;font-weight:400;color:#8a91ab;letter-spacing:-0.635px;">16:18</div>
<div class="t" style="left:1606.00px;top:513.00px;font-size:16px;font-weight:400;color:#000;letter-spacing:-0.189px;-webkit-text-stroke:0.45px #000;">En cours de traitement</div>
<div class="t" style="left:1606.00px;top:531.00px;font-size:16px;font-weight:400;color:#8a91ab;letter-spacing:-0.564px;">Pingen</div>
<div class="t" style="left:1606.00px;top:608.00px;font-size:16px;font-weight:400;color:#8a91ab;letter-spacing:-0.342px;">30.09.2025</div>
<div class="t" style="left:1798.10px;top:608.00px;font-size:16px;font-weight:400;color:#8a91ab;letter-spacing:-0.635px;">16:18</div>
<div class="t" style="left:1606.00px;top:632.00px;font-size:16px;font-weight:400;color:#000;letter-spacing:-0.293px;-webkit-text-stroke:0.45px #000;">Envoi accepté</div>
<div class="t" style="left:1606.00px;top:650.00px;font-size:16px;font-weight:400;color:#8a91ab;letter-spacing:-0.564px;">Pingen</div>
<div class="t" style="left:1606.00px;top:727.00px;font-size:16px;font-weight:400;color:#8a91ab;letter-spacing:-0.342px;">30.09.2025</div>
<div class="t" style="left:1798.10px;top:727.00px;font-size:16px;font-weight:400;color:#8a91ab;letter-spacing:-0.635px;">16:18</div>
<div class="t" style="left:1606.00px;top:751.00px;font-size:16px;font-weight:400;color:#000;letter-spacing:-0.351px;-webkit-text-stroke:0.45px #000;">Soumis</div>
<div class="t" style="left:1606.00px;top:769.00px;font-size:16px;font-weight:400;color:#8a91ab;letter-spacing:-0.564px;">Pingen</div>
<div class="t" style="left:1606.00px;top:846.00px;font-size:16px;font-weight:400;color:#8a91ab;letter-spacing:-0.342px;">30.09.2025</div>
<div class="t" style="left:1798.10px;top:846.00px;font-size:16px;font-weight:400;color:#8a91ab;letter-spacing:-0.635px;">16:18</div>
<div class="t" style="left:1606.00px;top:870.00px;font-size:16px;font-weight:400;color:#000;letter-spacing:-0.172px;-webkit-text-stroke:0.45px #000;">La validation a réussi</div>
<div class="t" style="left:1606.00px;top:888.00px;font-size:16px;font-weight:400;color:#8a91ab;letter-spacing:-0.564px;">Pingen</div>
<div class="t" style="left:1606.00px;top:964.00px;font-size:16px;font-weight:400;color:#8a91ab;letter-spacing:-0.342px;">30.09.2025</div>
<div class="t" style="left:1798.10px;top:964.00px;font-size:16px;font-weight:400;color:#8a91ab;letter-spacing:-0.635px;">16:18</div>
<div class="t" style="left:1606.00px;top:988.00px;font-size:16px;font-weight:400;color:#000;letter-spacing:-0.100px;-webkit-text-stroke:0.45px #000;">Adresse inscrite sur le document</div>
<div class="t" style="left:1606.00px;top:1006.00px;font-size:16px;font-weight:400;color:#8a91ab;letter-spacing:-0.564px;">Pingen</div>
<div class="t" style="left:1606.00px;top:1083.00px;font-size:16px;font-weight:400;color:#8a91ab;letter-spacing:-0.342px;">30.09.2025</div>
<div class="t" style="left:1798.10px;top:1083.00px;font-size:16px;font-weight:400;color:#8a91ab;letter-spacing:-0.635px;">16:17</div>
<div class="t" style="left:1606.00px;top:1107.00px;font-size:16px;font-weight:400;color:#000;letter-spacing:-0.232px;-webkit-text-stroke:0.45px #000;">La validation a échoué</div>
<div class="t" style="left:1606.00px;top:1125.00px;font-size:16px;font-weight:400;color:#8a91ab;letter-spacing:-0.564px;">Pingen</div>
<svg width="1912" height="1222" viewBox="0 0 1912 1222">
<rect x="1478" y="1141" width="434" height="81" fill="#fff"/>
<rect x="1478" y="1141" width="434" height="1" fill="#e9e9ec"/>
</svg>
<div class="t" style="left:1669.75px;top:1175.00px;font-size:19.5px;font-weight:400;color:#7b83a1;letter-spacing:-0.567px;-webkit-text-stroke:0.45px #7b83a1;">Fermer</div>
</body></html>
